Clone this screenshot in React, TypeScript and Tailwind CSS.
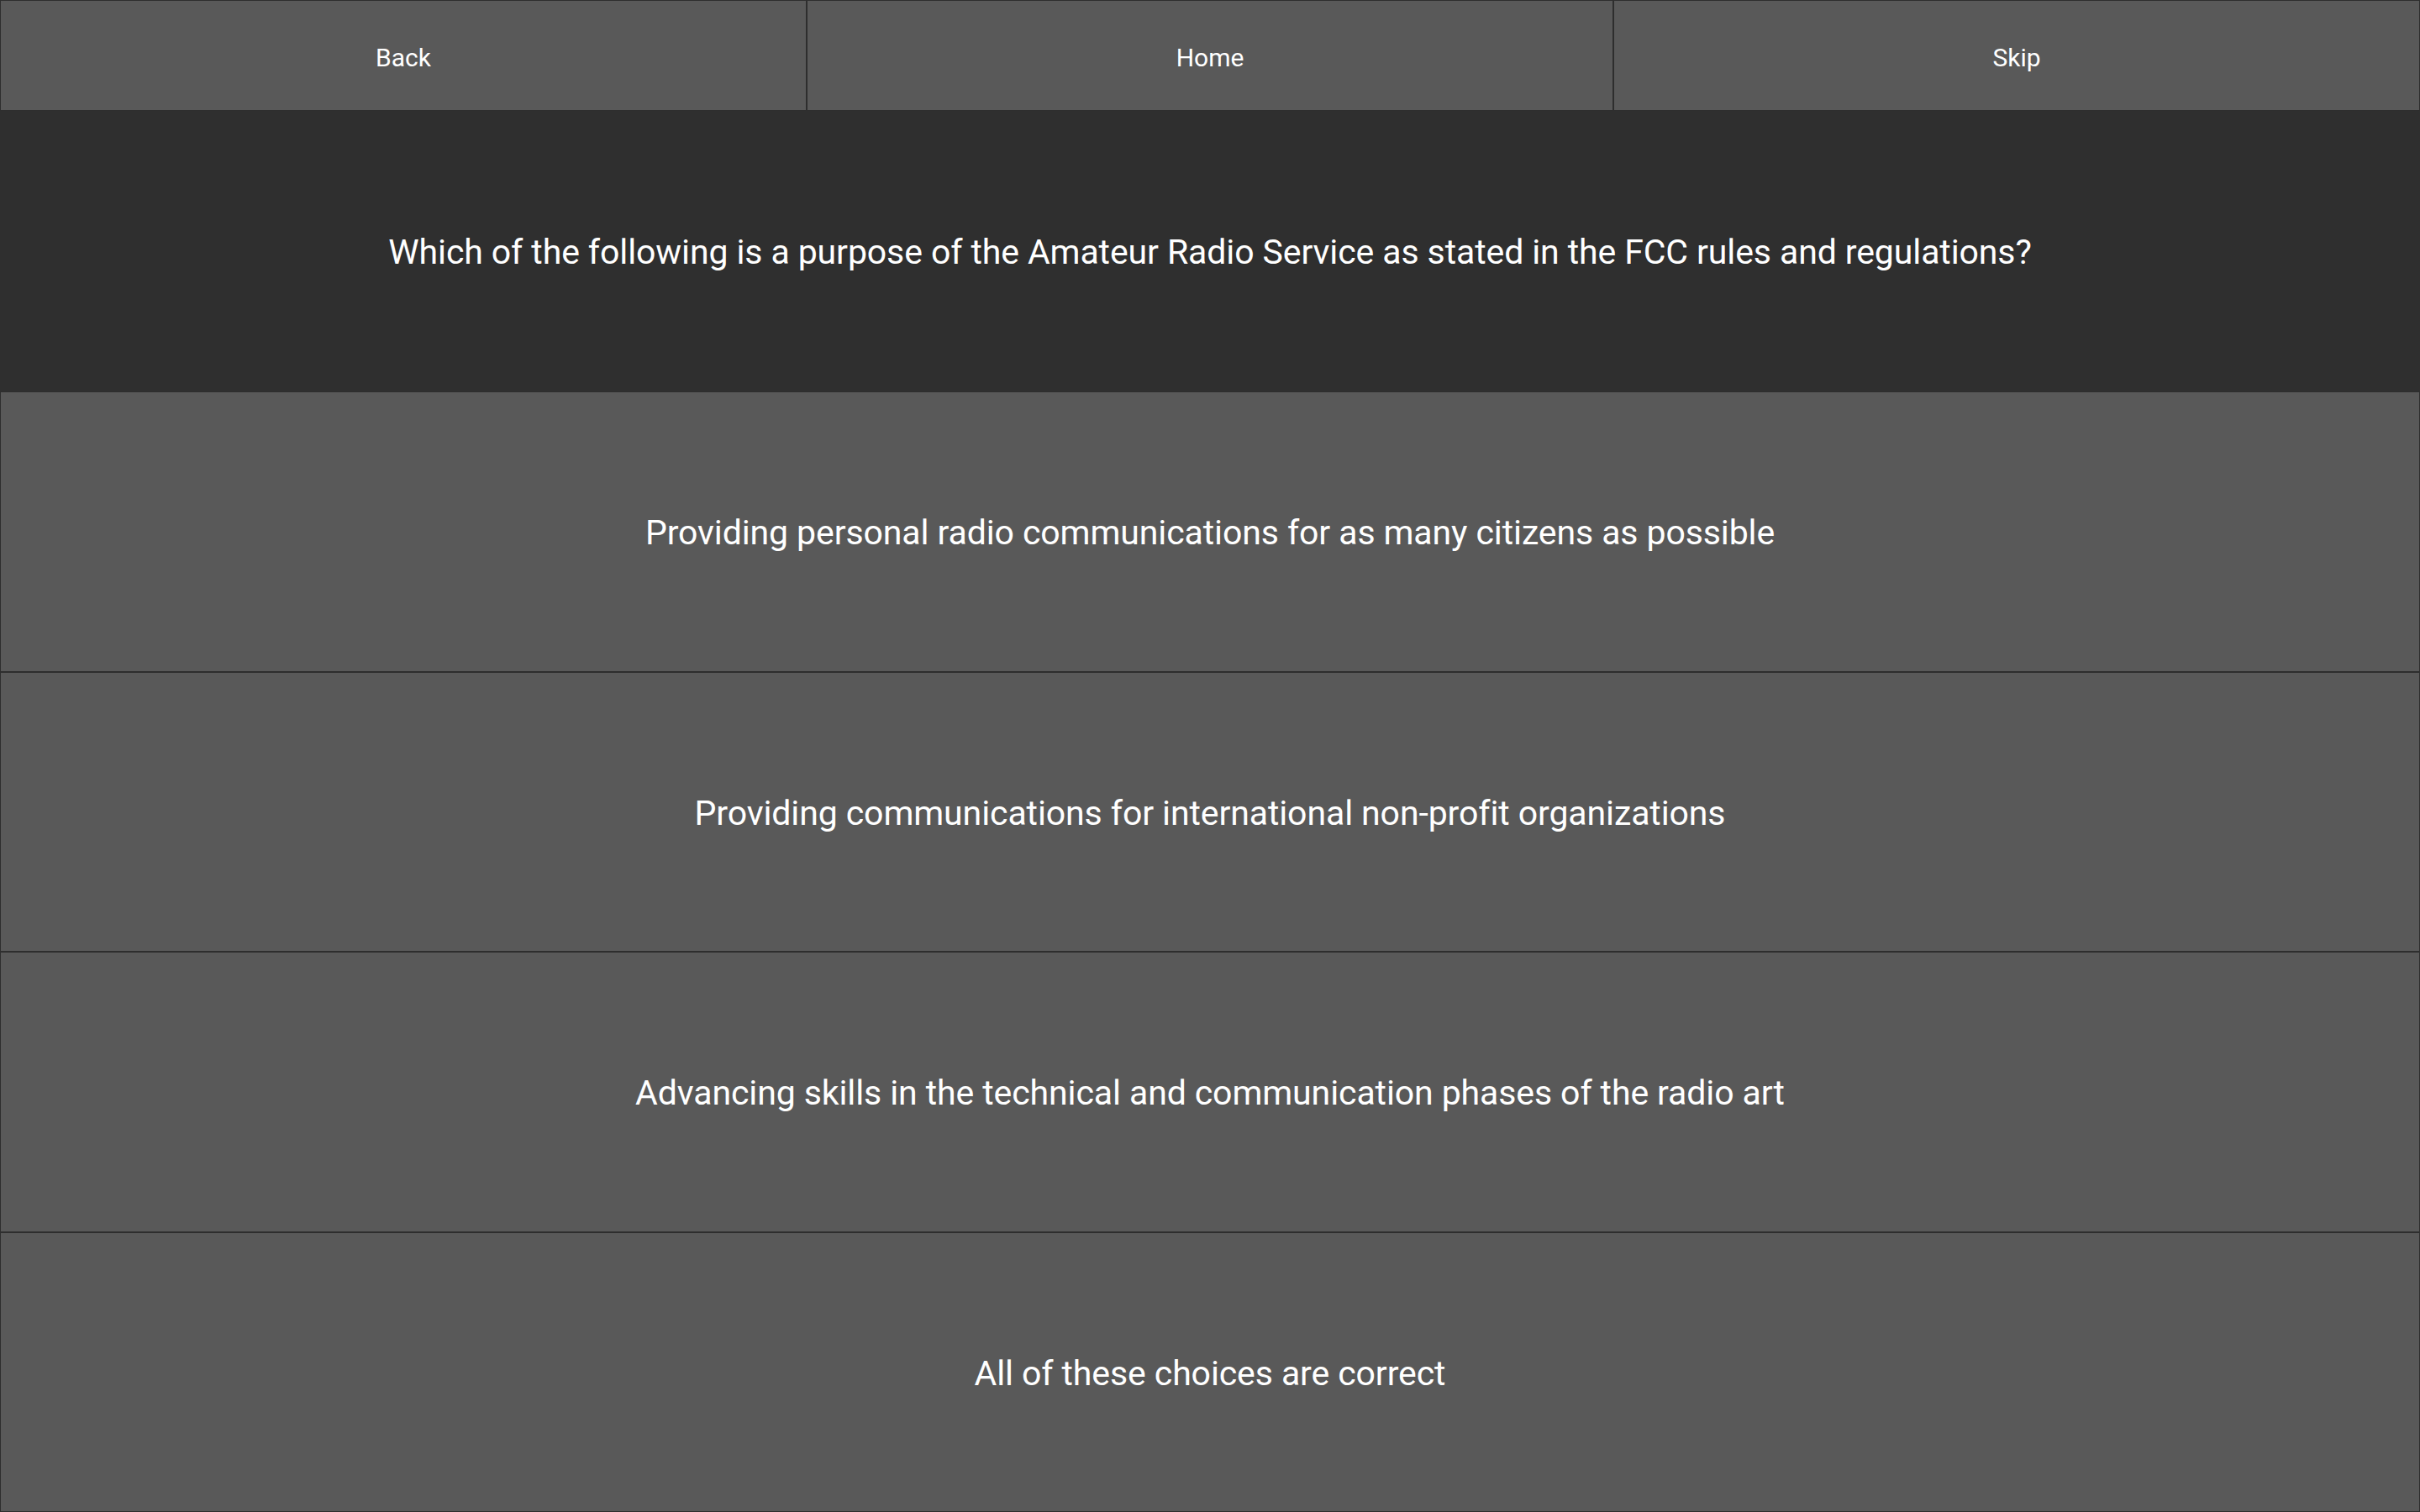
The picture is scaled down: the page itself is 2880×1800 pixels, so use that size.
import React from "react";

const options = [
  "Providing personal radio communications for as many citizens as possible",
  "Providing communications for international non-profit organizations",
  "Advancing skills in the technical and communication phases of the radio art",
  "All of these choices are correct",
];

export default function App() {
  return (
    <div
      className="flex h-screen w-full flex-col bg-[#2f2f2f] text-white"
      style={{ fontFamily: "Roboto, 'Liberation Sans', sans-serif" }}
    >
      <div className="flex h-[132px] shrink-0">
        {["Back", "Home", "Skip"].map((l) => (
          <button
            key={l}
            className="flex flex-1 items-center justify-center border border-[#2e2e2e] bg-[#595959] pt-[4px] text-[30px] text-white"
          >
            {l}
          </button>
        ))}
      </div>
      <div className="flex h-[334px] shrink-0 items-center justify-center bg-[#2f2f2f] pt-[4px] text-[41px] tracking-[-0.1px]">
        Which of the following is a purpose of the Amateur Radio Service as stated in the FCC rules and regulations?
      </div>
      {options.map((o) => (
        <button
          key={o}
          className="flex flex-1 items-center justify-center border border-[#2e2e2e] bg-[#595959] pt-[4px] text-[41px] tracking-[-0.1px] text-white"
        >
          {o}
        </button>
      ))}
    </div>
  );
}
